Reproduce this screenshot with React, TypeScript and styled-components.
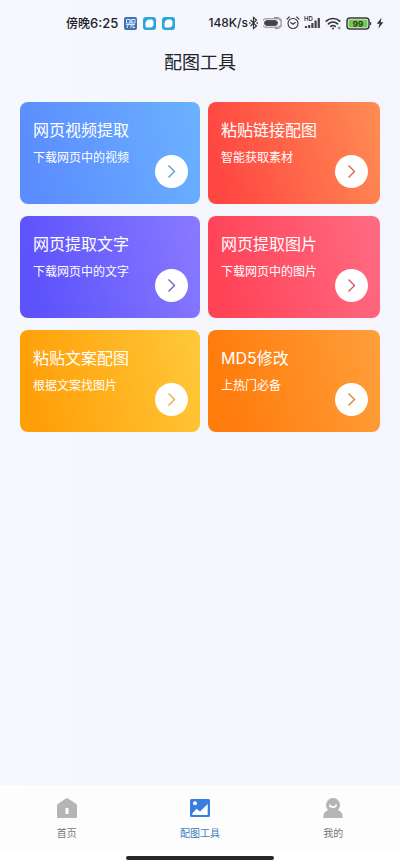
import React from "react";
import styled, { createGlobalStyle } from "styled-components";

const GlobalStyle = createGlobalStyle`
  *, *::before, *::after { box-sizing: border-box; }
  body {
    margin: 0;
    background: #f5f7fc;
    font-family: "Inter", "Noto Sans CJK SC", sans-serif;
    color: #20222a;
  }
`;

const Screen = styled.div`
  display: flex;
  flex-direction: column;
  min-height: 100vh;
  background: linear-gradient(90deg, #f5f8fc, #f5f5fd);
`;

const StatusBar = styled.div`
  display: flex;
  align-items: center;
  justify-content: space-between;
  height: 40px;
  padding: 6px 16px 0 66px;
`;

const StatusGroup = styled.div<{ $gap: number }>`
  display: flex;
  align-items: center;
  gap: ${({ $gap }) => $gap}px;
  svg { display: block; flex: none; }
`;

const StatusText = styled.span`
  font-size: 12px;
  line-height: 16px;
  font-weight: 500;
  white-space: nowrap;
`;

const Clock = styled.span`
  font-size: 13px;
`;

const Header = styled.header`
  display: flex;
  align-items: center;
  justify-content: center;
  height: 46px;
`;

const PageTitle = styled.h1`
  margin: 0;
  font-size: 18px;
  line-height: 24px;
  font-weight: 400;
`;

const Main = styled.main`
  flex: 1;
  padding: 16px 20px;
`;

const CardGrid = styled.div`
  display: grid;
  grid-template-columns: 180fr 172fr;
  gap: 12px 8px;
`;

const Card = styled.button<{ $from: string; $to: string }>`
  display: flex;
  align-items: flex-end;
  justify-content: space-between;
  height: 102px;
  padding: 16px 12px 16px 13px;
  border: 0;
  border-radius: 8px;
  background: linear-gradient(75deg, ${({ $from }) => $from} 10%, ${({ $to }) => $to});
  color: #fff;
  font-family: inherit;
  text-align: left;
  cursor: pointer;
`;

const CardText = styled.span`
  display: flex;
  flex-direction: column;
  align-self: flex-start;
  gap: 7px;
  white-space: nowrap;
`;

const CardTitle = styled.span`
  font-size: 16px;
  line-height: 24px;
`;

const CardNote = styled.span`
  font-size: 12px;
  line-height: 18px;
`;

const ArrowDisc = styled.span<{ $color: string }>`
  display: flex;
  align-items: center;
  justify-content: center;
  flex: none;
  width: 33px;
  height: 33px;
  margin-left: -20px;
  border-radius: 50%;
  background: #fff;
  color: ${({ $color }) => $color};
`;

const TabBar = styled.nav`
  display: grid;
  grid-template-columns: repeat(3, 1fr);
  height: 66px;
  padding-top: 12px;
  background: #fdfdfe;
`;

const Tab = styled.button<{ $active: boolean }>`
  display: flex;
  flex-direction: column;
  align-items: center;
  gap: 6px;
  padding: 0;
  border: 0;
  background: none;
  color: ${({ $active }) => ($active ? "#4080ba" : "#777")};
  font-family: inherit;
  font-size: 10px;
  line-height: 16px;
  cursor: pointer;
  svg { display: block; }
`;

const HomeStrip = styled.div`
  display: flex;
  justify-content: center;
  height: 15px;
  padding-top: 5px;
  background: #fff;
`;

const HomeIndicator = styled.div`
  width: 37%;
  height: 4px;
  border-radius: 2px;
  background: #292929;
`;

const GridAppIcon = () => (
  <svg width="13" height="13" viewBox="0 0 13 13" aria-hidden="true">
    <rect width="13" height="13" rx="2" fill="#3e73b8" />
    <path d="M2.500 2.500h3.500v3.500h-3.500zM8 2.500h3v3.500h-3zM2 7.500h9M7 2v9M3 11l1-3M9 7.500v3h2" fill="none" stroke="#dcebfa" strokeWidth="1" />
  </svg>
);

const BubbleAppIcon = () => (
  <svg width="13" height="13" viewBox="0 0 13 13" aria-hidden="true">
    <rect width="13" height="13" rx="3" fill="#2aa6d9" />
    <path d="M5.500 2.500h3q2 .5 2 2.500v2.500q-.5 3-3.500 3H4q-1.500 0-1.500-1.500V6q.5-3 3-3.500Z" fill="#fff" />
  </svg>
);

const BluetoothIcon = () => (
  <svg width="11" height="14" viewBox="0 0 11 14" fill="none" stroke="#333" strokeWidth="1.2" aria-hidden="true">
    <path d="M2.500 4l6 6L5.500 12.500v-11L8.500 4l-6 6" />
    <path d="M1 7h1.500M8.500 7H10" strokeWidth="1.5" />
  </svg>
);

const PillIcon = () => (
  <svg width="19" height="12" viewBox="0 0 19 12" fill="none" stroke="#555" aria-hidden="true">
    <rect x="1.500" y="3.500" width="13" height="5" rx="2.5" fill="#444" />
    <path d="M3 1.800h11a4.200 4.200 0 0 1 0 8.400H3a4.200 4.200 0 0 1 0-8.400M11 .5h3a5.300 5.300 0 0 1 0 11h-2" strokeWidth=".7" />
  </svg>
);

const AlarmIcon = () => (
  <svg width="14" height="14" viewBox="0 0 14 14" fill="none" stroke="#333" strokeWidth="1.1" strokeLinecap="round" aria-hidden="true">
    <circle cx="7" cy="7.5" r="5" />
    <path d="M4.7 6.5L7 8.3l2.3-1.8M1 3.2L3.3 1M13 3.2L10.7 1" />
  </svg>
);

const SignalIcon = () => (
  <svg width="17" height="14" viewBox="0 0 17 14" aria-hidden="true">
    <text x="0" y="5" fontSize="6" fontWeight="600" fill="#333">HD</text>
    <path d="M2 12v-2M5.200 12V9M8.400 12V7M11.600 12V4.500M14.800 12V2" stroke="#444" strokeWidth="2.200" />
  </svg>
);

const WifiIcon = () => (
  <svg width="17" height="13" viewBox="0 0 17 13" fill="none" stroke="#333" strokeWidth="1.6" strokeLinecap="round" aria-hidden="true">
    <path d="M1.2 4.2a10 10 0 0 1 13.6 0M3.4 6.9a6.7 6.7 0 0 1 9.2 0M5.8 9.4a3.4 3.4 0 0 1 4.4 0" />
    <circle cx="8" cy="11.5" r="1" fill="#333" stroke="none" />
    <circle cx="14" cy="11" r="1" strokeWidth=".8" stroke="#777" />
  </svg>
);

const BatteryIcon = () => (
  <svg width="26" height="13" viewBox="0 0 26 13" role="img" aria-label="99%">
    <rect x="1" y="1" width="22" height="11" rx="3" fill="#f5f7fc" stroke="#383d38" strokeWidth="1.5" />
    <rect x="2.500" y="2.500" width="19" height="8" rx="1.5" fill="#74c94f" />
    <path d="M24.5 5v3" stroke="#383d38" strokeWidth="1.3" />
    <text x="12" y="9.5" fontSize="8" fontWeight="700" textAnchor="middle" fill="#26351f">99</text>
  </svg>
);

const BoltIcon = () => (
  <svg width="8" height="12" viewBox="0 0 8 12" aria-hidden="true">
    <path d="M5.5.8L.8 6.8h2.700L2.400 11.400 7.400 5.200H4.700z" fill="#333" />
  </svg>
);

const ChevronIcon = () => (
  <svg width="12" height="16" viewBox="0 0 12 16" fill="none" stroke="currentColor" strokeWidth="1.4" aria-hidden="true">
    <path d="M2.500 1.500L8.500 7.500l-6 6" />
  </svg>
);

const HomeIcon = () => (
  <svg width="22" height="22" viewBox="0 0 22 22" aria-hidden="true">
    <path d="M10 1.5q1-.7 2 0l8 5.2q1 .7 1 1.8V20q0 1-1 1H2q-1 0-1-1V8.5q0-1.1 1-1.8z" fill="#b5b5b5" />
    <rect x="9.5" y="11" width="3" height="6" fill="#fff" />
  </svg>
);

const PictureIcon = () => (
  <svg width="22" height="22" viewBox="0 0 22 22" aria-hidden="true">
    <rect x="1" y="2" width="20" height="18" rx="1.5" fill="#397de0" />
    <circle cx="6" cy="6.2" r="2" fill="#fff" />
    <path d="M3.3 18v-1.5l4.200-4.800 3.500 2.800 7.700-7.500v11z" fill="#fff" />
  </svg>
);

const PersonIcon = () => (
  <svg width="22" height="22" viewBox="0 0 22 22" aria-hidden="true">
    <path d="M11 1a7 7 0 0 1 4.8 12c3 1.200 4.900 3.500 4.900 6.500 0 1-.4 1.500-1.300 1.500H2.600c-.9 0-1.300-.5-1.300-1.500 0-3 1.900-5.300 4.900-6.500A7 7 0 0 1 11 1Z" fill="#b5b5b5" />
    <path d="M8 8.200q0 1.800 3 1.800t3-1.800" fill="none" stroke="#fff" strokeWidth="1.8" strokeLinecap="round" />
  </svg>
);

const tools = [
  { title: "网页视频提取", note: "下载网页中的视频", from: "#5b8dff", to: "#6bb2ff", arrow: "#5b9ccb" },
  { title: "粘贴链接配图", note: "智能获取素材", from: "#ff4742", to: "#ff8d53", arrow: "#d26c50" },
  { title: "网页提取文字", note: "下载网页中的文字", from: "#5d52fc", to: "#897bff", arrow: "#6764bd" },
  { title: "网页提取图片", note: "下载网页中的图片", from: "#ff4357", to: "#ff6c84", arrow: "#d35771" },
  { title: "粘贴文案配图", note: "根据文案找图片", from: "#ff9f08", to: "#ffc93a", arrow: "#e3ae46" },
  { title: "MD5修改", note: "上热门必备", from: "#ff7b0b", to: "#ff9f3b", arrow: "#d88835" },
];

const tabs = [
  { label: "首页", icon: <HomeIcon />, active: false },
  { label: "配图工具", icon: <PictureIcon />, active: true },
  { label: "我的", icon: <PersonIcon />, active: false },
];

export default function App() {
  return (
    <>
      <GlobalStyle />
      <Screen>
        <StatusBar>
          <StatusGroup $gap={6}>
            <StatusText>傍晚<Clock>6:25</Clock></StatusText>
            <GridAppIcon />
            <BubbleAppIcon />
            <BubbleAppIcon />
          </StatusGroup>
          <StatusGroup $gap={4}>
            <StatusGroup $gap={0}>
              <StatusText>148K/s</StatusText>
              <BluetoothIcon />
            </StatusGroup>
            <PillIcon />
            <AlarmIcon />
            <SignalIcon />
            <WifiIcon />
            <BatteryIcon />
            <BoltIcon />
          </StatusGroup>
        </StatusBar>
        <Header>
          <PageTitle>配图工具</PageTitle>
        </Header>
        <Main>
          <CardGrid>
            {tools.map((tool) => (
              <Card key={tool.title} type="button" $from={tool.from} $to={tool.to}>
                <CardText>
                  <CardTitle>{tool.title}</CardTitle>
                  <CardNote>{tool.note}</CardNote>
                </CardText>
                <ArrowDisc $color={tool.arrow}>
                  <ChevronIcon />
                </ArrowDisc>
              </Card>
            ))}
          </CardGrid>
        </Main>
        <TabBar>
          {tabs.map((tab) => (
            <Tab key={tab.label} type="button" $active={tab.active} aria-current={tab.active ? "page" : undefined}>
              {tab.icon}
              {tab.label}
            </Tab>
          ))}
        </TabBar>
        <HomeStrip>
          <HomeIndicator />
        </HomeStrip>
      </Screen>
    </>
  );
}
